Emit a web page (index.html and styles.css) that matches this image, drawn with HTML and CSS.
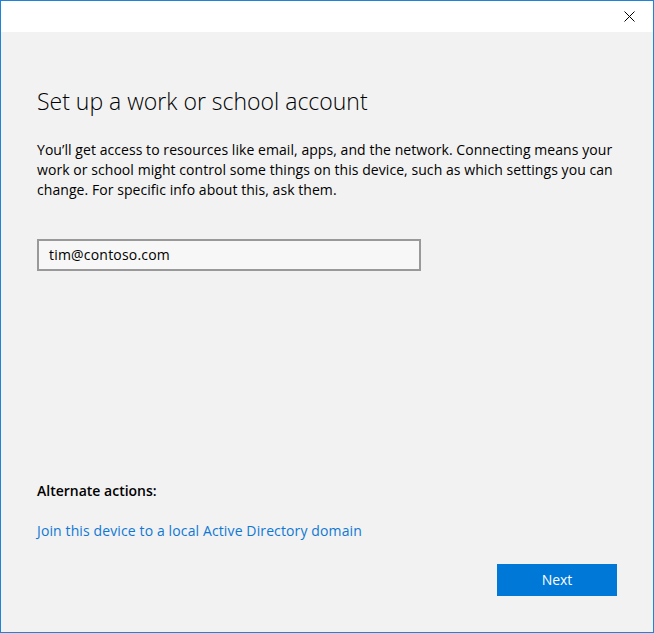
FILE: index.html
```html
<!DOCTYPE html>
<html lang="en">
<head>
  <meta charset="UTF-8">
  <title>Set up a work or school account</title>
  <link rel="stylesheet" href="styles.css">
</head>
<body>
  <div class="window">
    <!-- Title bar -->
    <div class="title-bar">
      <svg class="close-icon" width="11" height="11" viewBox="0 0 11 11">
        <path d="M0.5 0.5L10.5 10.5M10.5 0.5L0.5 10.5" stroke="#000" stroke-width="1" fill="none"/>
      </svg>
    </div>

    <div class="content">
      <h1 class="heading">Set up a work or school account</h1>
      <p class="intro">You’ll get access to resources like email, apps, and the network. Connecting means your<br>work or school might control some things on this device, such as which settings you can<br>change. For specific info about this, ask them.</p>
      <div class="email-box">tim@contoso.com</div>

      <div class="alternate">
        <div class="alternate-label">Alternate actions:</div>
        <a class="alternate-link">Join this device to a local Active Directory domain</a>
      </div>

      <div class="footer">
        <div class="next-button">Next</div>
      </div>
    </div>
  </div>
</body>
</html>
```

FILE: styles.css
```css
html, body {
  margin: 0;
  padding: 0;
  height: 100%;
  font-family: "Open Sans", "Noto Sans", sans-serif;
  color: #000;
}

.window {
  box-sizing: border-box;
  height: 633px;
  border: 1px solid #1f83d8;
  display: flex;
  flex-direction: column;
  background-color: #f2f2f2;
}

.title-bar {
  height: 31px;
  flex-shrink: 0;
  background-color: #fff;
  display: flex;
  align-items: center;
  justify-content: flex-end;
  padding-right: 18px;
}

.content {
  flex: 1;
  display: flex;
  flex-direction: column;
  padding: 0 36px 36px;
}

.heading {
  margin: 52px 0 0;
  font-size: 23px;
  font-weight: 300;
  line-height: 34px;
}

.intro {
  margin: 22px 0 0;
  font-size: 14px;
  letter-spacing: 0.06px;
  line-height: 20px;
}

.email-box {
  box-sizing: border-box;
  width: 384px;
  height: 32px;
  margin-top: 39px;
  padding-left: 10px;
  border: 2px solid #999;
  background-color: #f7f7f7;
  font-size: 14px;
  letter-spacing: 0.2px;
  line-height: 28px;
}

.alternate {
  margin-top: auto;
  display: flex;
  flex-direction: column;
}

.alternate-label {
  font-size: 14px;
  font-weight: 600;
  line-height: 20px;
}

.alternate-link {
  margin-top: 20px;
  font-size: 14px;
  letter-spacing: 0.12px;
  line-height: 20px;
  color: #0f78d4;
}

.footer {
  display: flex;
  justify-content: flex-end;
  margin-top: 23px;
}

.next-button {
  width: 120px;
  height: 32px;
  background-color: #0078d7;
  color: #fff;
  font-size: 14px;
  line-height: 32px;
  text-align: center;
}
```
